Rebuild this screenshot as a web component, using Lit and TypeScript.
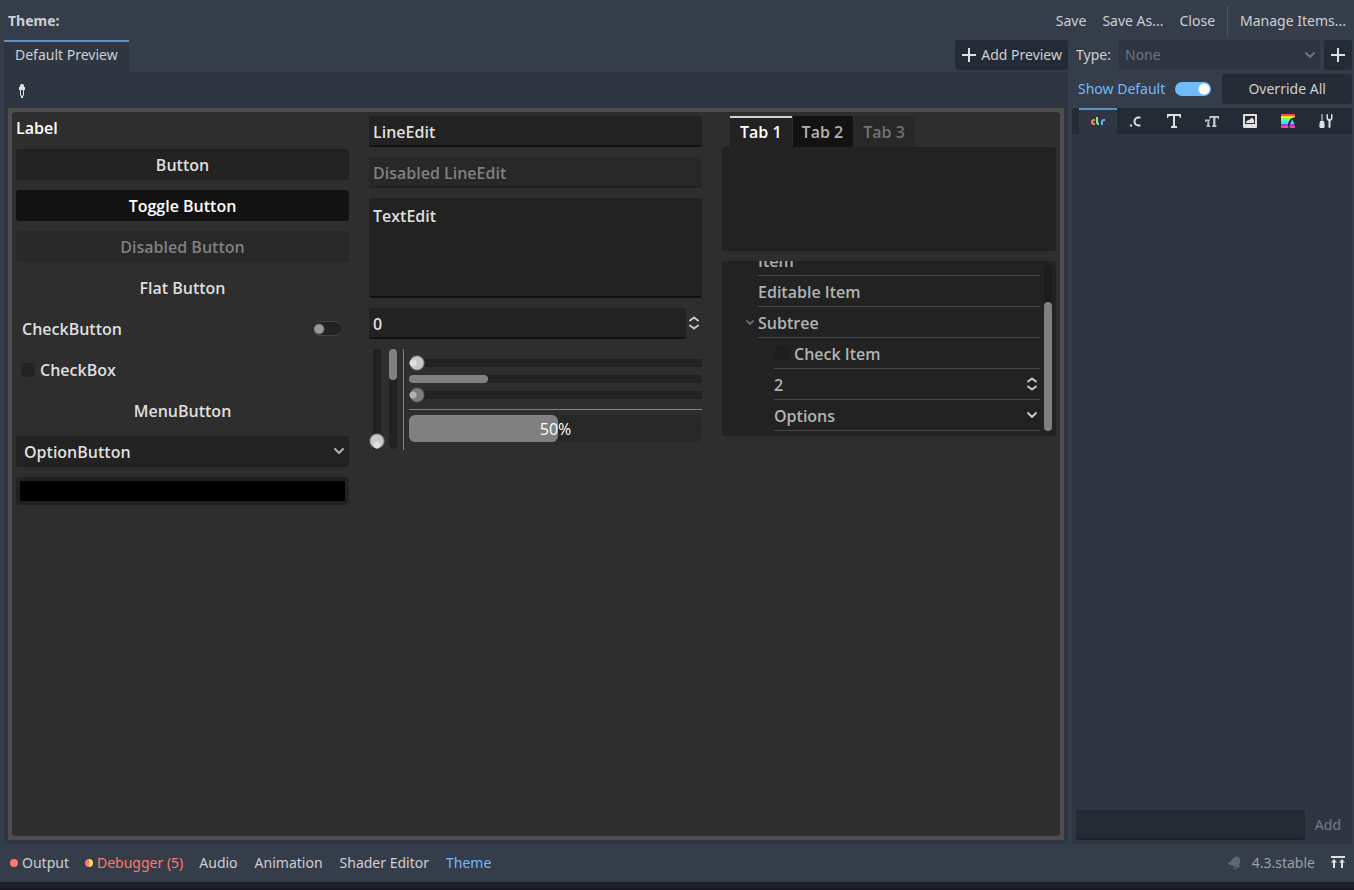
import { LitElement, html, svg, css } from "lit";
import { customElement } from "lit/decorators.js";

const icon = (body: unknown, cls = "icon") =>
  html`<svg class=${cls} width="16" height="16" viewBox="0 0 16 16" aria-hidden="true">${body}</svg>`;

const plus = svg`<path fill="#e0e0e0" d="M7 1v6H1v2h6v6h2V9h6V7H9V1z"/>`;
const chevron = svg`<path fill="none" stroke="currentColor" stroke-width="2" stroke-linecap="round" stroke-linejoin="round" d="m4 6 4 4 4-4"/>`;
const smallChevron = svg`<path fill="none" stroke="currentColor" stroke-width="2" stroke-linecap="round" d="m5 6 3 3 3-3"/>`;
const updown = svg`<path fill="none" stroke="currentColor" stroke-width="2" stroke-linecap="round" stroke-linejoin="round" d="M4 5.5 8 2.5l4 3M4 10.5l4 3 4-3"/>`;
const picker = svg`<path fill="#e0e0e0" d="M6 4V2.500a1.500 1.500 0 0 1 1.500-1.500h1A1.500 1.500 0 0 1 10 2.500V4h1v3h-1v5L9 13.500V15H7v-1.500L6 12V7H5V4zM7 7v5l1 1 1-1V7z"/>`;

const itemIcons = [
  {
    name: "Colors",
    art: svg`<g fill="none" stroke-width="2"><path stroke="#ff7a70" d="M5 7H4a2 2 0 0 0 0 4h1"/><path stroke="#7cf080" d="M7 4v5a2 2 0 0 0 2 2"/><path stroke="#5fb2ff" d="M12 12V9a2 2 0 0 1 2-2h1"/></g>`,
  },
  {
    name: "Constants",
    art: svg`<path fill="#e0e0e0" d="M2 11.500h2v2H2z"/><path fill="none" stroke="#e0e0e0" stroke-width="2" d="M12.500 4.500h-2a4 4 0 0 0 0 8h2"/>`,
  },
  {
    name: "Fonts",
    art: svg`<path fill="#e0e0e0" d="M1 1v4h1c0-1.200.8-2 2-2h3v9c0 .8-.4 1-1 1H5v2h6v-2h-1c-.6 0-1-.2-1-1V3h3c1.200 0 2 .8 2 2h1V1z"/>`,
  },
  {
    name: "Font sizes",
    art: svg`<path fill="#b8babd" d="M1 6.500v2.500h1c0-.7.3-1 1-1h.3v4.500H2.500V14h3.600v-1.500h-.8V8H6V6.500z"/><path fill="#e0e0e0" fill-opacity=".9" d="M5.500 3v3h1c0-.8.400-1.300 1.200-1.300h1.500v7.100c0 .5-.2.7-1 .7V14h4.200v-1.500c-.8 0-1-.2-1-.7V4.700h1.400c.8 0 1.200.5 1.200 1.300h1V3z"/>`,
  },
  {
    name: "Icons",
    art: svg`<path fill="#e0e0e0" fill-rule="evenodd" d="M2 1a1 1 0 0 0-1 1v12a1 1 0 0 0 1 1h12a1 1 0 0 0 1-1V2a1 1 0 0 0-1-1zm1 2h10v8H3z"/><path fill="#e0e0e0" d="M4 10V9l2-2h1l3-2.500L12 7v3z"/>`,
  },
  {
    name: "Styles",
    art: svg`<path fill="#ff4545" d="M1 2a1 1 0 0 1 1-1h12a1 1 0 0 1 1 1v1H1z"/><path fill="#ffe345" d="M1 3h14v2H1z"/><path fill="#80ff45" d="M1 5h14v2H1z"/><path fill="#45ffa2" d="M1 7h14v2H1z"/><path fill="#45d7ff" d="M1 9h14v2H1z"/><path fill="#8045ff" d="M1 11h14v2H1z"/><path fill="#ff4596" d="M1 13h14v1a1 1 0 0 1-1 1H2a1 1 0 0 1-1-1z"/><path fill="#252b34" d="M15 4c-4 .8-7 4-7 8 0 1.200.2 2.200.7 3H10c-1-1.500-.5-3.500.5-5 .7-1.200 1.300-2 1.800-3.500.8 2 2 3.200 2.200 5.500L15 13z"/>`,
  },
  {
    name: "Tools",
    art: svg`<path fill="#e0e0e0" d="M3.500 1h1v7H6v1.500h.5V12a2 2 0 0 1-2 3h-1a2 2 0 0 1-2-3V9.500H2V8h1.500z"/><path fill="#e0e0e0" d="M8.500 1.500v4A3 3 0 0 0 10.500 8v6a1 1 0 0 0 2 0V8a3 3 0 0 0 2-2.500v-4l-1.500-.5v4l-.7 1h-1.600l-.7-1V1z"/>`,
  },
];

const bell = svg`<path fill="#606671" d="M11 1.500 13.500 2.500C15 5 14 8 13 10l.5 1.500-1 1.500L2 9v-1.500L4 7c1.500-1.500 2.500-4.500 7-5.500zM7 12l4 1.500c-1 1.700-3.500 1-4-1.500z"/>`;
const expand = svg`<path fill="#e0e0e0" d="M1 1h14v2H1zM4 4l3 3.500H5V13H3V7.500H1zM12 4l3 3.500h-2V13h-2V7.500H9z"/>`;

@customElement("app-root")
export class AppRoot extends LitElement {
  static styles = css`
    :host {
      display: flex;
      flex-direction: column;
      min-height: 100vh;
      box-sizing: border-box;
      background: #363d4a;
      color: #cdcfd2;
      font: 14px/20px "Noto Sans", sans-serif;
    }
    *, *::before { box-sizing: border-box; }
    button, input, select, textarea {
      font: inherit;
      color: inherit;
      background: none;
      border: 0;
      border-radius: 3px;
      margin: 0;
      padding: 0;
      outline: none;
      appearance: none;
      min-width: 0;
    }
    .icon, .arrow { display: block; flex: none; }
    .header {
      display: flex;
      align-items: center;
      height: 40px;
      padding: 2px 8px 0 8px;
      gap: 12px;
    }
    .title { flex: 1; font-weight: 700; }
    .actions { display: flex; gap: 16px; }
    .manage { display: flex; align-items: center; height: 30px; padding-left: 12px; border-left: 1px solid #50565f; border-radius: 0; }
    .work { flex: 1; display: flex; gap: 4px; padding: 0 2px 0 4px; }
    .main { flex: 1; display: flex; flex-direction: column; min-width: 0; }
    .bar { display: flex; justify-content: space-between; height: 32px; }
    .previewtab {
      padding: 0 11px 4px;
      background: #303641;
      border-top: 2px solid #5694cb;
      border-radius: 0;
    }
    .dark { background: #252b34; height: 30px; display: flex; align-items: center; justify-content: center; }
    .addpreview { gap: 4px; padding: 0 6px; }
    .mainpanel {
      flex: 1;
      display: flex;
      flex-direction: column;
      background: #303641;
      padding: 4px;
      border-radius: 0 0 3px 3px;
    }
    .tools { height: 32px; display: flex; align-items: center; padding: 0 6px 2px; }
    .frame { flex: 1; display: flex; background: #4d4d4d; padding: 4px; }
    .preview {
      flex: 1;
      display: grid;
      grid-template-columns: minmax(0, 333fr) minmax(0, 333fr) minmax(0, 334fr);
      gap: 20px;
      align-items: start;
      padding: 4px;
      border-radius: 4px;
      background: #2e2e2e;
      color: #dfdfdf;
      font: 600 16px/23px "Open Sans", sans-serif;
    }
    .col { display: flex; flex-direction: column; gap: 10px; }
    .label { height: 23px; padding-top: 1px; color: #fff; }
    .text { padding-top: 2px; }
    .btn { height: 31px; padding-top: 2px; text-align: center; }
    .normal { background: #222; }
    .pressed { background: #121212; color: #fff; }
    .btn:disabled { background: #282828; color: #808080; }
    .check { display: flex; align-items: center; height: 31px; padding: 0 5px; gap: 5px; }
    .spread { justify-content: space-between; padding: 0 7px 0 6px; }
    .box { width: 14px; height: 14px; background: #232323; }
    .switch {
      width: 30px;
      height: 15px;
      border-radius: 8px;
      border: 1px solid #434343;
      border-width: 1px 0;
      background: radial-gradient(circle at 7px 7px, #999 4px, #99999900 6px) #222;
    }
    .select { display: grid; position: relative; }
    .select select { width: 100%; height: 31px; padding: 2px 8px 0; }
    .select .arrow { position: absolute; right: 2px; top: 7px; color: #b2b2b2; pointer-events: none; }
    .swatch { height: 28px; background: #000; border: 4px solid #222; border-radius: 4px; }
    .line {
      height: 31px;
      width: 100%;
      padding: 2px 4px 0;
      background: #222;
      border-bottom: 2px solid #121212;
    }
    .line:disabled { background: #282828; color: #808080; border-color: #222; }
    .area { height: 100px; padding: 7px 4px; background: #222; border-bottom: 2px solid #121212; resize: none; display: block; }
    .spin { display: flex; align-items: center; }
    .spin .arrow { margin-bottom: 2px; color: #c8c8c8; }
    .sliders { display: flex; gap: 4px; height: 101px; }
    .vrange { writing-mode: vertical-lr; direction: rtl; width: 16px; height: 100px; }
    .vrange::-webkit-slider-runnable-track {
      width: 16px;
      border-radius: 4px;
      background: linear-gradient(#222, #222) center / 8px 100% no-repeat;
    }
    .vrange::-webkit-slider-thumb {
      appearance: none;
      width: 16px;
      height: 16px;
      background: radial-gradient(circle at 8px 12px, #dedede 3px, #dedede00 4px), radial-gradient(circle, #c8c8c8 6px, #c8c8c800 8px);
    }
    .vscroll { width: 8px; height: 100px; border-radius: 4px; background: #222; }
    .vthumb { height: 31px; border-radius: 4px; background: #808080; }
    .vsep { width: 1px; margin: 0 1px 0 2px; background: #808080; }
    .stack { flex: 1; display: flex; flex-direction: column; padding-top: 6px; min-width: 0; }
    .hrange { width: 100%; height: 16px; display: block; }
    .hrange::-webkit-slider-runnable-track {
      height: 16px;
      border-radius: 4px;
      background: linear-gradient(#222, #222) center / 100% 8px no-repeat;
    }
    .hrange::-webkit-slider-thumb {
      appearance: none;
      width: 16px;
      height: 16px;
      background: radial-gradient(circle at 4px 8px, #dedede 3px, #dedede00 4px), radial-gradient(circle, #c8c8c8 6px, #c8c8c800 8px);
    }
    .hrange:disabled::-webkit-slider-thumb {
      background: radial-gradient(circle at 4px 8px, #b0b0b0 3px, #b0b0b000 4px), radial-gradient(circle, #7c7c7c 6px, #7c7c7c00 8px);
    }
    .hscroll { height: 8px; margin: 4px 0; border-radius: 4px; background: #222; }
    .hthumb { width: 27%; height: 8px; border-radius: 4px; background: #808080; }
    .hsep { height: 1px; margin: 6px 0 5px; background: #808080; }
    .progress { display: grid; height: 27px; border-radius: 6px; background: #282828; color: #fff; }
    .fill { grid-area: 1 / 1; border-radius: 6px; background: #808080; }
    .percent { grid-area: 1 / 1; place-self: center; padding-top: 2px; font-weight: 500; }
    .tabs { display: flex; padding-left: 8px; }
    .tab { height: 31px; padding: 2px 10px 0; border-radius: 0; border-top: 2px solid transparent; border-bottom: 2px solid transparent; }
    .tab + .tab { padding-left: 9px; border-top-width: 0; padding-top: 4px; border-left: 1px solid #2e2e2e; }
    .tab.on { background: #222; color: #fff; border-top-color: #d2d2d2; }
    .tab.off { background: #121212; color: #b2b2b2; border-bottom-color: #121212; }
    .tab:disabled { background: #282828; color: #737373; }
    .tabpanel { height: 104px; border-radius: 3px; background: #222; }
    .tree {
      display: flex;
      gap: 4px;
      height: 175px;
      padding: 4px 4px 5px 20px;
      overflow: hidden;
      border-radius: 4px;
      background: #222;
      color: #b2b2b2;
    }
    .rows { flex: 1; display: flex; flex-direction: column; justify-content: flex-end; }
    .row { flex: none; display: flex; align-items: center; height: 31px; }
    .cell { flex: 1; display: flex; align-items: center; gap: 5px; height: 31px; border-bottom: 1px solid #494949; }
    .cell .box { background: #1e1e1e; margin-left: 1px; }
    .num { width: 40px; padding-top: 2px; }
    .gutter { width: 16px; color: #666; }
    .level2 { padding-left: 32px; }
    .cell .arrow { margin-left: auto; color: #c8c8c8; }
    .bartrack { display: flex; align-items: flex-end; width: 8px; border-radius: 4px; background: #1c1c1c; }
    .barthumb { width: 8px; height: 78%; border-radius: 4px; background: #808080; }

    .side { width: 280px; display: flex; flex-direction: column; gap: 4px; }
    .type { display: flex; align-items: center; gap: 4px; }
    .typelabel { width: 43px; padding-left: 4px; }
    .type .select { flex: 1; color: #6d727b; }
    .type .select select { height: 30px; padding: 0 6px; background: #303641; opacity: 1; }
    .type .select .arrow { color: #6d727b; }
    .type .dark { width: 28px; }
    .defaults { display: flex; gap: 11px; align-items: center; }
    .showdefault { display: flex; align-items: center; gap: 10px; padding-left: 6px; color: #70bafa; }
    .toggle {
      width: 36px;
      height: 14px;
      border-radius: 7px;
      background: radial-gradient(circle at 29px 7px, #fff 5px, #ffffff00 6px) #70bafa;
    }
    .override { flex: 1; }
    .itempanel { flex: 1; display: flex; flex-direction: column; background: #303641; border-radius: 3px; }
    .itemtabs { display: flex; height: 26px; padding-left: 7px; background: #252b34; border-radius: 3px 3px 0 0; }
    .itemtab { flex: 0 0 38px; display: flex; justify-content: center; align-items: center; border-radius: 0; border-top: 2px solid transparent; padding-bottom: 2px; }
    .itemtab.on { background: #303641; border-top-color: #5694cb; }
    .additem { display: flex; margin-top: auto; padding: 4px; align-items: center; gap: 10px; }
    .name { flex: 1; height: 30px; padding: 0 4px; background: #252b34; border-bottom: 2px solid #1d2229; }
    .add { color: #747983; padding-right: 7px; }

    .footer { display: flex; align-items: center; gap: 16px; height: 38px; padding: 0 8px 0 10px; }
    .foot { display: flex; align-items: center; gap: 4px; }
    .docks { display: flex; gap: 17px; }
    .dot { width: 8px; height: 8px; border-radius: 4px; background: #ff786b; }
    .split { background: linear-gradient(90deg, #ff786b 50%, #ffde66 50%); }
    .error { color: #ff786b; }
    .active { color: #70bafa; }
    .status { display: flex; align-items: center; gap: 10px; margin-left: auto; }
    .version { color: #9a9ea6; margin-right: 5px; }
    .strip { height: 8px; background: #1d2229; border-bottom: 2px solid #171520; }
  `;

  render() {
    return html`
      <header class="header">
        <span class="title">Theme:</span>
        <div class="actions">
          <button>Save</button>
          <button>Save As...</button>
          <button>Close</button>
        </div>
        <button class="manage">Manage Items...</button>
      </header>
      <div class="work">
        <main class="main">
          <div class="bar">
            <button class="previewtab">Default Preview</button>
            <button class="dark addpreview">${icon(plus)}Add Preview</button>
          </div>
          <div class="mainpanel">
            <div class="tools"><button aria-label="Pick control">${icon(picker)}</button></div>
            <div class="frame">${this.renderPreview()}</div>
          </div>
        </main>
        ${this.renderSide()}
      </div>
      <footer class="footer">
        <button class="foot"><span class="dot"></span>Output</button>
        <button class="foot error"><span class="dot split"></span>Debugger (5)</button>
        <div class="docks">
          <button>Audio</button>
          <button>Animation</button>
          <button>Shader Editor</button>
          <button class="active">Theme</button>
        </div>
        <div class="status">
          <button aria-label="Notifications">${icon(bell)}</button>
          <button class="version">4.3.stable</button>
          <button aria-label="Expand panel">${icon(expand)}</button>
        </div>
      </footer>
      <div class="strip"></div>
    `;
  }

  renderPreview() {
    return html`
      <div class="preview">
        <div class="col">
          <span class="label">Label</span>
          <button class="btn normal">Button</button>
          <button class="btn pressed" aria-pressed="true">Toggle Button</button>
          <button class="btn" disabled>Disabled Button</button>
          <button class="btn">Flat Button</button>
          <label class="check spread"><span class="text">CheckButton</span><input class="switch" type="checkbox" role="switch" /></label>
          <label class="check"><input class="box" type="checkbox" /><span class="text">CheckBox</span></label>
          <button class="btn">MenuButton</button>
          <div class="select">
            <select class="normal" aria-label="Option"><option>OptionButton</option></select>
            ${icon(chevron, "arrow")}
          </div>
          <button class="swatch" aria-label="Color"></button>
        </div>
        <div class="col">
          <input class="line" aria-label="Line" .value=${"LineEdit"} />
          <input class="line" aria-label="Disabled line" .value=${"Disabled LineEdit"} disabled />
          <textarea class="area" aria-label="Text" .value=${"TextEdit"}></textarea>
          <div class="spin">
            <input class="line" aria-label="Number" inputmode="numeric" .value=${"0"} />
            ${icon(updown, "arrow")}
          </div>
          <div class="sliders">
            <input class="vrange" type="range" aria-label="Vertical" .value=${"0"} />
            <div class="vscroll"><div class="vthumb"></div></div>
            <div class="vsep"></div>
            <div class="stack">
              <input class="hrange" type="range" aria-label="Horizontal" .value=${"0"} />
              <div class="hscroll"><div class="hthumb"></div></div>
              <input class="hrange" type="range" aria-label="Disabled horizontal" .value=${"0"} disabled />
              <div class="hsep"></div>
              <div class="progress" role="progressbar" aria-valuenow="50">
                <div class="fill" style="width: 51%"></div>
                <span class="percent">50%</span>
              </div>
            </div>
          </div>
        </div>
        <div class="col">
          <div>
            <div class="tabs">
              <button class="tab on">Tab 1</button>
              <button class="tab off">Tab 2</button>
              <button class="tab" disabled>Tab 3</button>
            </div>
            <div class="tabpanel"></div>
          </div>
          <div class="tree">
            <div class="rows">
              <div class="row"><span class="gutter"></span><div class="cell"><span class="text">Item</span></div></div>
              <div class="row"><span class="gutter"></span><div class="cell"><span class="text">Editable Item</span></div></div>
              <div class="row">
                <span class="gutter">${icon(smallChevron)}</span>
                <div class="cell"><span class="text">Subtree</span></div>
              </div>
              <div class="row level2">
                <label class="cell"><input class="box" type="checkbox" /><span class="text">Check Item</span></label>
              </div>
              <div class="row level2">
                <div class="cell"><input class="num" aria-label="Range" .value=${"2"} />${icon(updown, "arrow")}</div>
              </div>
              <div class="row level2">
                <div class="cell"><span class="text">Options</span>${icon(chevron, "arrow")}</div>
              </div>
            </div>
            <div class="bartrack"><div class="barthumb"></div></div>
          </div>
        </div>
      </div>
    `;
  }

  renderSide() {
    return html`
      <aside class="side">
        <div class="type">
          <label class="typelabel" for="type">Type:</label>
          <div class="select">
            <select id="type" disabled><option>None</option></select>
            ${icon(chevron, "arrow")}
          </div>
          <button class="dark" aria-label="Add type">${icon(plus)}</button>
        </div>
        <div class="defaults">
          <label class="showdefault">Show Default<input class="toggle" type="checkbox" role="switch" checked /></label>
          <button class="dark override">Override All</button>
        </div>
        <div class="itempanel">
          <div class="itemtabs">
            ${itemIcons.map(
              (item, i) => html`<button class="itemtab ${i === 0 ? "on" : ""}" aria-label=${item.name}>${icon(item.art)}</button>`
            )}
          </div>
          <div class="additem">
            <input class="name" aria-label="Item name" />
            <button class="add" disabled>Add</button>
          </div>
        </div>
      </aside>
    `;
  }
}
